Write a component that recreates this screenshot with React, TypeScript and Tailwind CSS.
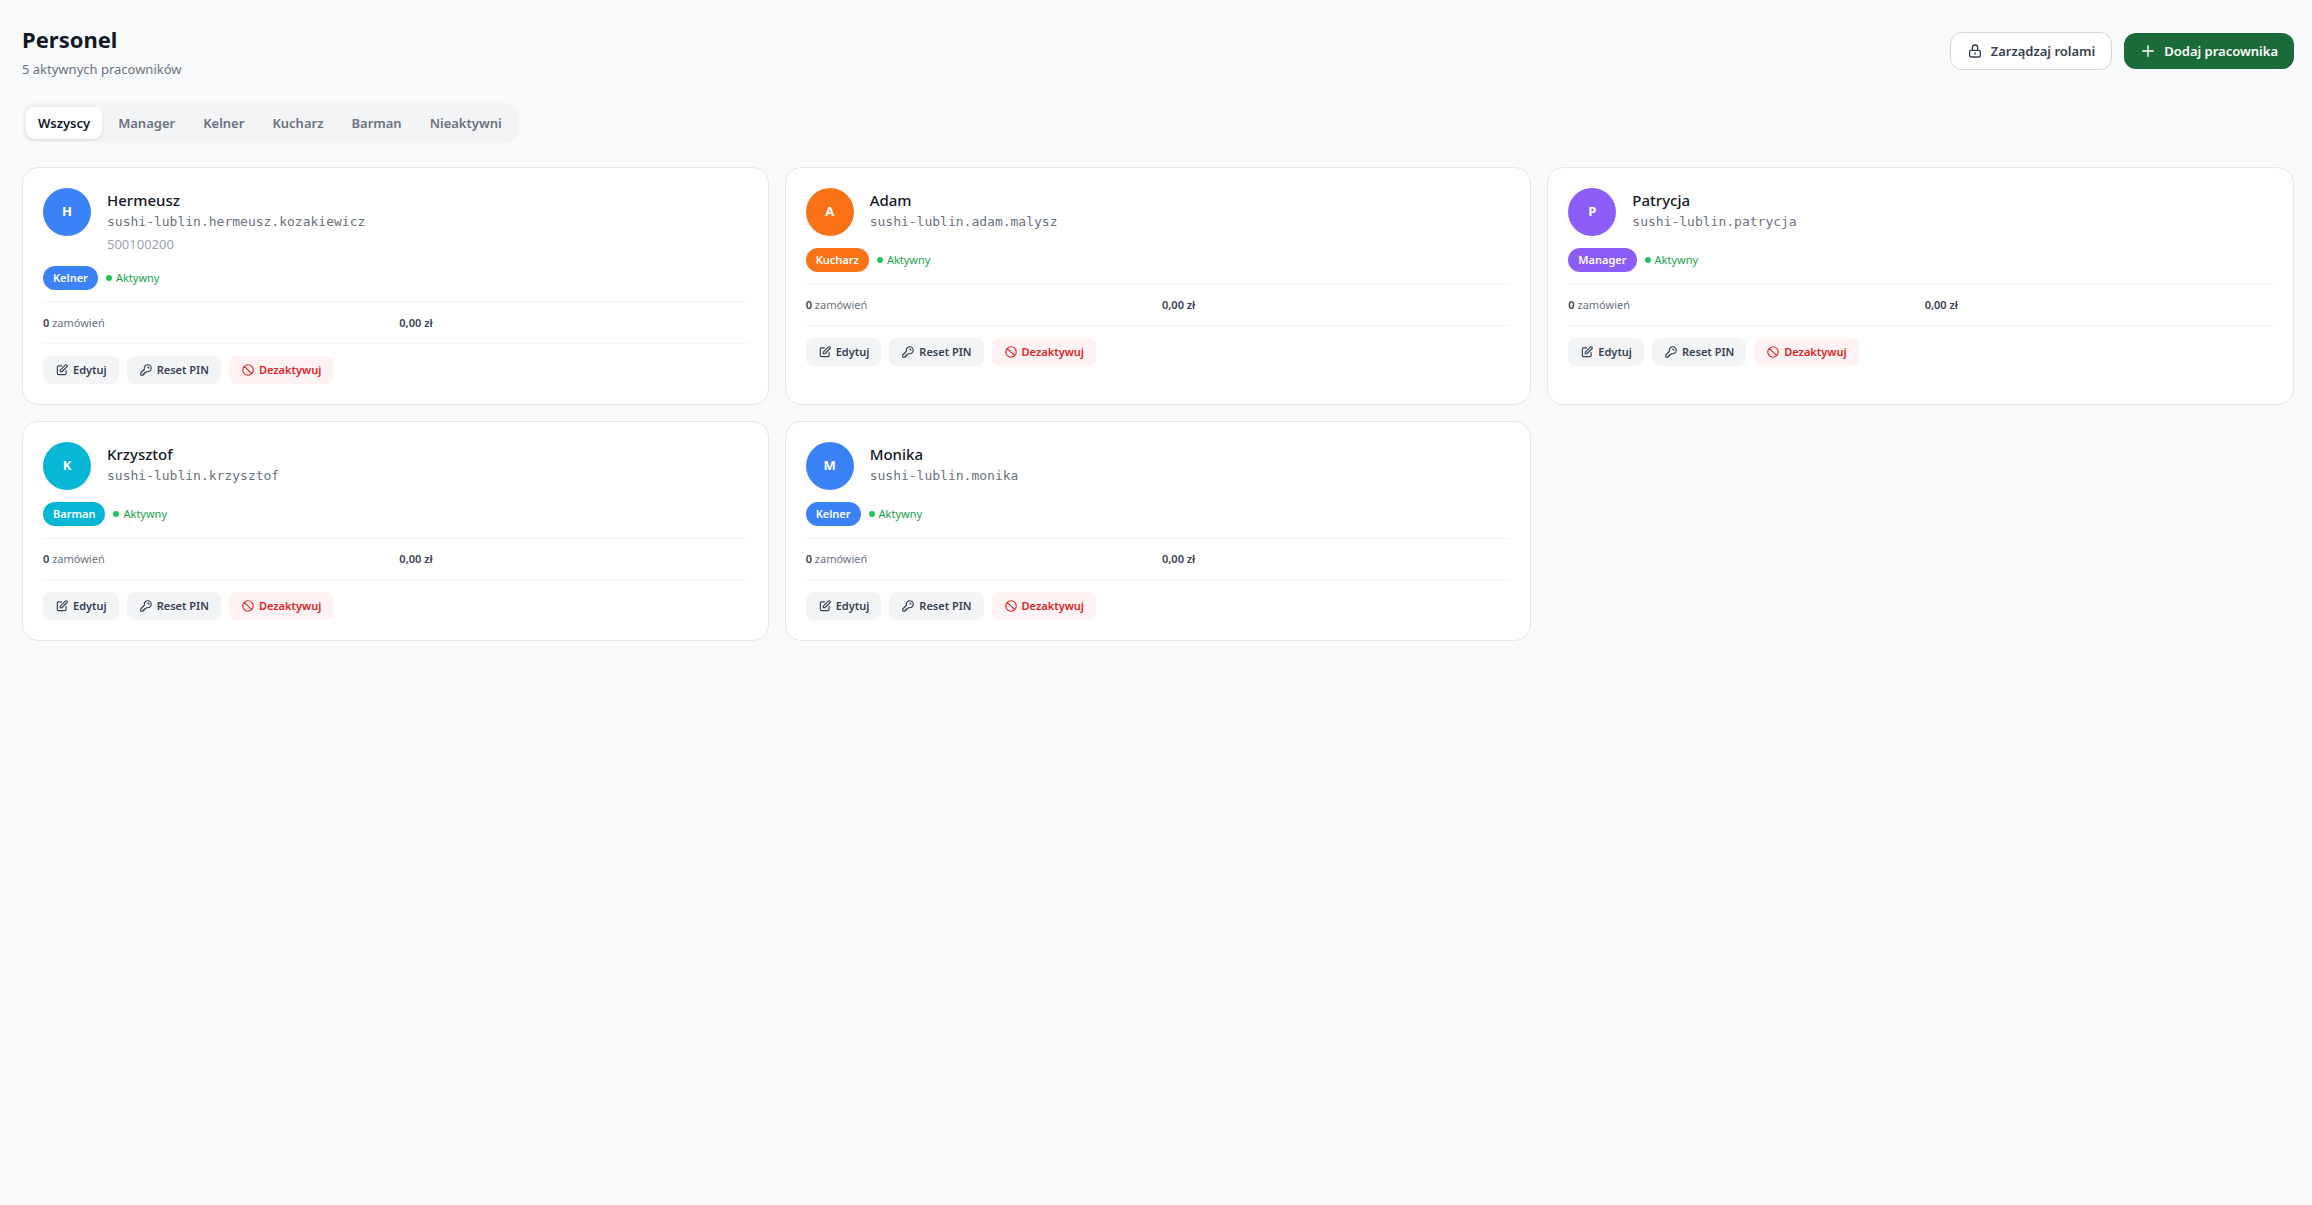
import React, { useState } from 'react';

interface Employee {
  name: string;
  login: string;
  phone?: string;
  role: 'Kelner' | 'Kucharz' | 'Manager' | 'Barman';
}

const EMPLOYEES: Employee[] = [
  { name: 'Hermeusz', login: 'sushi-lublin.hermeusz.kozakiewicz', phone: '500100200', role: 'Kelner' },
  { name: 'Adam', login: 'sushi-lublin.adam.malysz', role: 'Kucharz' },
  { name: 'Patrycja', login: 'sushi-lublin.patrycja', role: 'Manager' },
  { name: 'Krzysztof', login: 'sushi-lublin.krzysztof', role: 'Barman' },
  { name: 'Monika', login: 'sushi-lublin.monika', role: 'Kelner' },
];

const TABS = ['Wszyscy', 'Manager', 'Kelner', 'Kucharz', 'Barman', 'Nieaktywni'];

const ROLE_COLORS = {
  Kelner: 'bg-[#3b82f6]',
  Kucharz: 'bg-[#f97316]',
  Manager: 'bg-[#8b5cf6]',
  Barman: 'bg-[#06b6d4]',
};

const ICONS = {
  lock: 'M12 15v2m-6 4h12a2 2 0 002-2v-6a2 2 0 00-2-2H6a2 2 0 00-2 2v6a2 2 0 002 2zm10-10V7a4 4 0 00-8 0v4h8z',
  plus: 'M12 4v16m8-8H4',
  edit: 'M11 5H6a2 2 0 00-2 2v11a2 2 0 002 2h11a2 2 0 002-2v-5m-1.414-9.414a2 2 0 112.828 2.828L11.828 15H9v-2.828l8.586-8.586z',
  key: 'M15 7a2 2 0 012 2m4 0a6 6 0 01-7.743 5.743L11 17H9v2H7v2H4a1 1 0 01-1-1v-2.586a1 1 0 01.293-.707l5.964-5.964A6 6 0 1121 9z',
  ban: 'M18.364 18.364A9 9 0 005.636 5.636m12.728 12.728A9 9 0 015.636 5.636m12.728 12.728L5.636 5.636',
};

const Icon: React.FC<{ name: keyof typeof ICONS; className: string }> = ({ name, className }) => (
  <svg className={className} fill="none" stroke="currentColor" viewBox="0 0 24 24" aria-hidden="true">
    <path strokeLinecap="round" strokeLinejoin="round" strokeWidth={2} d={ICONS[name]} />
  </svg>
);

const EmployeeCard: React.FC<{ employee: Employee }> = ({ employee }) => {
  const color = ROLE_COLORS[employee.role];
  const action = 'flex items-center gap-1 h-7 px-3 rounded-lg text-[11px] font-semibold';

  return (
    <div className="bg-white rounded-2xl border border-[#e5e7eb] p-5">
      {/* Header */}
      <div className="flex items-start gap-4 mb-3">
        <div className={`w-12 h-12 shrink-0 rounded-full flex items-center justify-center text-white text-[13px] font-bold ${color}`}>
          {employee.name[0]}
        </div>
        <div className="min-w-0">
          <h3 className="text-[15px] leading-6 font-medium text-[#111827]">{employee.name}</h3>
          <p className="font-['DejaVu_Sans_Mono',monospace] text-[13px] leading-5 text-[#6b7280] truncate">{employee.login}</p>
          {employee.phone && <p className="mt-0.5 text-[13px] leading-5 text-[#9ca3af]">{employee.phone}</p>}
        </div>
      </div>

      {/* Role and status */}
      <div className="flex items-center gap-2 mb-3">
        <span className={`h-6 px-2.5 rounded-full flex items-center text-white text-[11px] font-semibold ${color}`}>
          {employee.role}
        </span>
        <span className="flex items-center gap-1 text-[11px] text-[#16a34a]">
          <span className="w-1.5 h-1.5 rounded-full bg-[#22c55e]" />
          Aktywny
        </span>
      </div>

      {/* Stats */}
      <div className="grid grid-cols-2 gap-2 py-3 mb-3 border-y border-[#f3f4f6] text-[11px] leading-4 text-[#6b7280]">
        <div>
          <span className="font-semibold text-[#374151]">0</span> zamówień
        </div>
        <div className="font-semibold text-[#374151]">0,00 zł</div>
      </div>

      {/* Actions */}
      <div className="flex gap-2">
        <button type="button" className={`${action} bg-[#f3f4f6] text-[#374151]`}>
          <Icon name="edit" className="w-3.5 h-3.5" />
          Edytuj
        </button>
        <button type="button" className={`${action} bg-[#f3f4f6] text-[#374151]`}>
          <Icon name="key" className="w-3.5 h-3.5" />
          Reset PIN
        </button>
        <button type="button" className={`${action} bg-[#fef2f2] text-[#dc2626]`}>
          <Icon name="ban" className="w-3.5 h-3.5" />
          Dezaktywuj
        </button>
      </div>
    </div>
  );
};

const App: React.FC = () => {
  const [tab, setTab] = useState('Wszyscy');

  const visible = EMPLOYEES.filter((e) => tab === 'Wszyscy' || e.role === tab);

  return (
    <div className="min-h-screen bg-[#f9fafb] pt-[23px] pb-6 pl-[22px] pr-[18px] font-['Noto_Sans','Open_Sans',sans-serif]">
      <header className="flex items-center justify-between mb-6">
        <div>
          <h1 className="text-[22px] leading-8 font-bold text-[#111827]">Personel</h1>
          <p className="mt-1 text-[13px] leading-5 text-[#6b7280]">5 aktywnych pracowników</p>
        </div>
        <div className="flex items-center gap-3 text-[13px] leading-5 font-semibold">
          <button type="button" className="flex items-center gap-2 px-4 py-2 rounded-xl border border-[#d1d5db] bg-white text-[#374151]">
            <Icon name="lock" className="w-4 h-4" />
            Zarządzaj rolami
          </button>
          <button type="button" className="flex items-center gap-2 px-4 py-2 rounded-xl bg-[#1b6b3a] text-white">
            <Icon name="plus" className="w-4 h-4" />
            Dodaj pracownika
          </button>
        </div>
      </header>

      <nav className="flex gap-1 w-fit p-1 mb-6 rounded-xl bg-[#f3f4f6]">
        {TABS.map((t) => (
          <button
            key={t}
            type="button"
            onClick={() => setTab(t)}
            className={`px-3 py-1.5 rounded-lg text-[13px] leading-5 font-semibold ${
              t === tab ? 'bg-white text-[#111827] shadow-sm' : 'text-[#6b7280]'
            }`}
          >
            {t}
          </button>
        ))}
      </nav>

      <main className="grid grid-cols-3 gap-4">
        {visible.map((employee) => (
          <EmployeeCard key={employee.login} employee={employee} />
        ))}
      </main>
    </div>
  );
};

export default App;
